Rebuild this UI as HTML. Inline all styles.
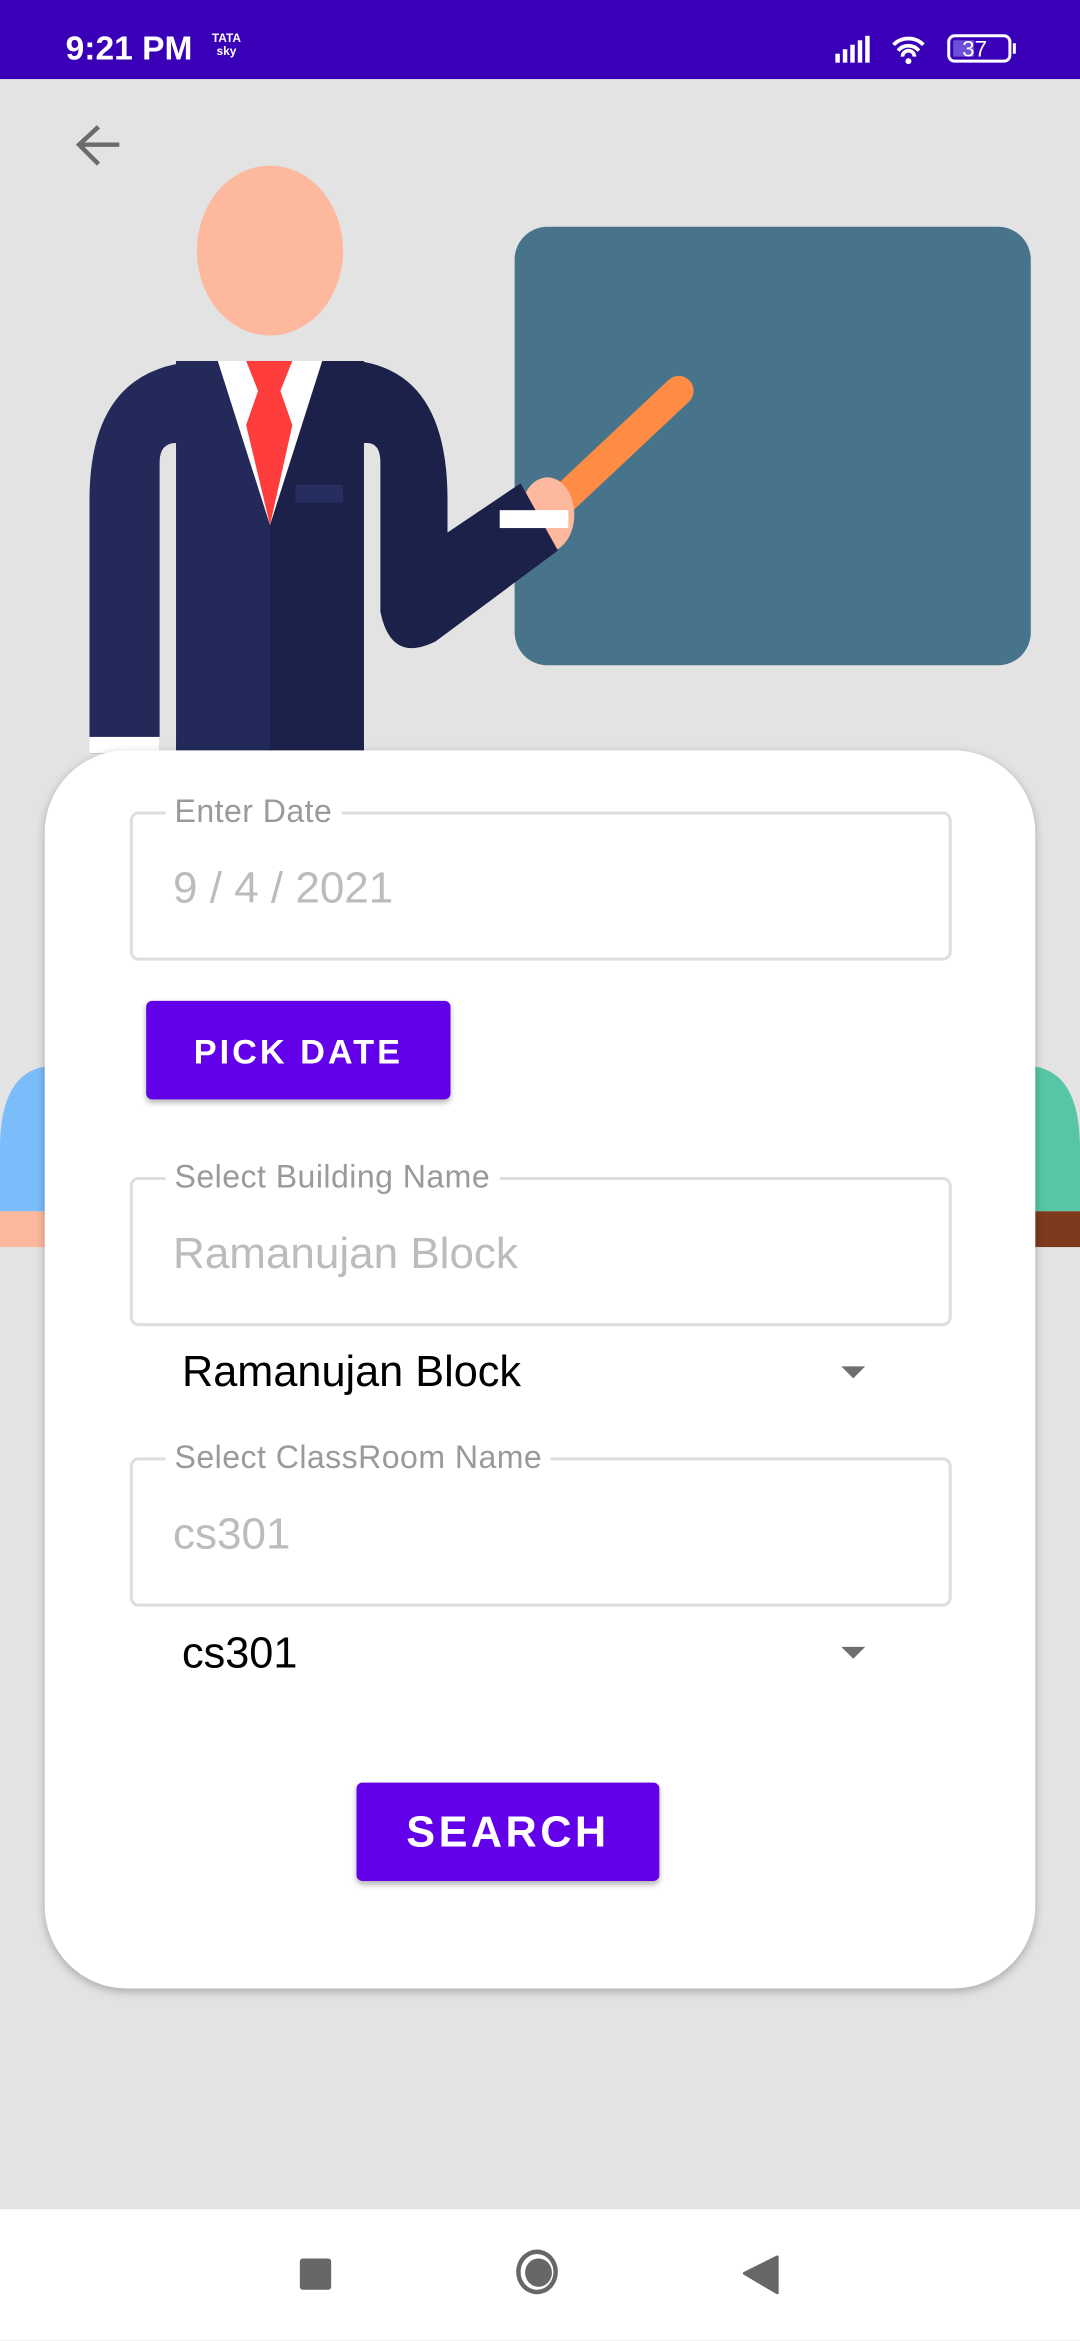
<!DOCTYPE html>
<html><head><meta charset="utf-8"><style>
html,body{margin:0;padding:0;width:1080px;height:2340px;overflow:hidden;background:#e3e3e3;font-family:"Liberation Sans",sans-serif}
#w{position:absolute;left:0;top:0;width:724px;height:1569px;transform:scale(1.49171);transform-origin:0 0;background:#e3e3e3}
.a{position:absolute}
.fld{position:absolute;left:87px;width:547px;height:96px;border:2px solid #dedede;border-radius:6px}
.lbl{position:absolute;left:22px;top:-14px;background:#fff;padding:0 6px;font-size:21.5px;color:#9a9a9a;letter-spacing:.3px;line-height:24px}
.val{position:absolute;left:27px;top:34px;font-size:29.5px;color:#bcbcbc;line-height:32px}
.btn{position:absolute;background:#6200ea;color:#fff;border-radius:4px;font-weight:bold;text-align:center;box-shadow:0 2px 4px rgba(0,0,0,.3)}
.sp{position:absolute;left:122px;font-size:29px;color:#000;line-height:32px}
.tri{position:absolute;left:564px;width:0;height:0;border-left:8px solid transparent;border-right:8px solid transparent;border-top:8px solid #6e6e6e}
</style></head><body><div id="w">
<div class="a" style="left:0;top:0;width:724px;height:53px;background:#3a00b8"></div>
<div class="a" style="left:44px;top:20px;color:#fff;font-size:22.5px;font-weight:bold;line-height:26px">9:21 PM</div>
<div class="a" style="left:142px;top:21px;color:#fff;font-size:8px;font-weight:bold;line-height:9px;text-align:center">TATA<br>sky</div>
<svg class="a" style="left:556px;top:20px" width="130" height="26" viewBox="0 0 130 26">
<g fill="#fff"><rect x="4" y="16" width="3" height="6"/><rect x="9" y="13" width="3" height="9"/><rect x="14" y="10" width="3" height="12"/><rect x="19" y="7" width="3" height="15"/><rect x="24" y="4" width="3" height="18"/></g>
<path d="M43 10a14 14 0 0 1 20 0M46 14a9 9 0 0 1 14 0M49 18a4 4 0 0 1 8 0" stroke="#fff" stroke-width="2.5" fill="none"/>
<circle cx="53" cy="21" r="2" fill="#fff"/>
<rect x="80" y="4" width="41" height="17" rx="4" fill="none" stroke="#fff" stroke-width="2"/>
<rect x="83" y="7" width="14" height="11" fill="#6c4fd6"/>
<rect x="123" y="9" width="2" height="7" fill="#fff"/>
<text x="89" y="18" fill="#fff" font-size="15" font-family="Liberation Sans">37</text>
</svg>
<svg class="a" style="left:0;top:53px" width="724" height="800" viewBox="0 53 724 800">
<path d="M80 97H54M66 85L53 97L66 110" stroke="#6b6b6b" stroke-width="3" fill="none"/>
<rect x="345" y="152" width="346" height="294" rx="22" fill="#47748b"/>
<ellipse cx="181" cy="168" rx="49" ry="57" fill="#fdb89e"/>
<path d="M60 505V335Q60 242 140 242H181V297H118Q107 297 107 310V505Z" fill="#232a5a"/>
<rect x="118" y="242" width="63" height="263" fill="#232a5a"/>
<rect x="181" y="242" width="63" height="263" fill="#1b2149"/>
<line x1="372" y1="340" x2="455" y2="262" stroke="#ff8c45" stroke-width="20" stroke-linecap="round"/>
<ellipse cx="367" cy="345" rx="18" ry="25" fill="#fdb89e"/>
<path d="M181 242H240Q300 250 300 335V357L349 324L374 369L292 430Q262 445 255 410V310Q255 297 246 297H181Z" fill="#1b2149"/>
<path d="M146 242H216L181 352Z" fill="#fff"/>
<path d="M165 242H196L188 262L196 285L181 352L165 285L173 262Z" fill="#ff3d3d"/>
<rect x="198" y="325" width="32" height="12" fill="#252e5e"/>
<rect x="60" y="494" width="47" height="11" fill="#fff"/>
<rect x="335" y="342" width="46" height="12" fill="#fff"/>
<path d="M0 812V770Q0 720 30 715V812Z" fill="#7bbdfb"/>
<rect x="0" y="812" width="30" height="24" fill="#fdb89e"/>
<path d="M724 812V770Q724 720 694 715V812Z" fill="#56c6a6"/>
<rect x="694" y="812" width="30" height="24" fill="#7f3a1e"/>
</svg>
<div class="a" style="left:30px;top:503px;width:664px;height:830px;background:#fff;border-radius:55px;box-shadow:0 2px 6px rgba(0,0,0,.25)"></div>
<div class="fld" style="top:544px"><div class="lbl">Enter Date</div><div class="val">9 / 4 / 2021</div></div>
<div class="btn" style="left:98px;top:671px;width:204px;height:66px;line-height:68px;font-size:23px;letter-spacing:2px">PICK DATE</div>
<div class="fld" style="top:789px"><div class="lbl">Select Building Name</div><div class="val">Ramanujan Block</div></div>
<div class="sp" style="top:904px">Ramanujan Block</div><div class="tri" style="top:916px"></div>
<div class="fld" style="top:977px"><div class="lbl">Select ClassRoom Name</div><div class="val">cs301</div></div>
<div class="sp" style="top:1093px">cs301</div><div class="tri" style="top:1104px"></div>
<div class="btn" style="left:239px;top:1195px;width:203px;height:66px;line-height:68px;font-size:29px;letter-spacing:2.3px">SEARCH</div>
<div class="a" style="left:0;top:1481px;width:724px;height:88px;background:#fff"></div>
<div class="a" style="left:201px;top:1514px;width:21px;height:21px;background:#676767;border-radius:2px"></div>
<div class="a" style="left:346px;top:1508px;width:28px;height:30px;border:3px solid #676767;border-radius:50%;box-sizing:border-box"></div>
<div class="a" style="left:352px;top:1514px;width:18px;height:19px;background:#676767;border-radius:50%"></div>
<svg class="a" style="left:495px;top:1510px" width="30" height="30"><path d="M26 3V27L4 14Z" fill="#676767" stroke="#676767" stroke-linejoin="round" stroke-width="2"/></svg>
</div></body></html>
